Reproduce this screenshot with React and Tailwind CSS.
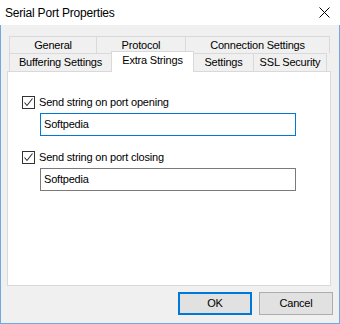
import React from "react";

function Tab({ children, className = "" }) {
  return (
    <div className={"flex items-center justify-center bg-[#f0f0f0] border-[#d9d9d9] " + className}>
      {children}
    </div>
  );
}

function Check({ label }) {
  return (
    <div className="flex items-center h-[15px] ml-[14px]">
      <div className="w-[13px] h-[13px] border border-[#333333] bg-white flex items-center justify-center">
        <svg width="11" height="11" viewBox="0 0 11 11">
          <path d="M1.5 5.5 L4 8.5 L9.5 1.5" fill="none" stroke="#333333" strokeWidth="1.1" />
        </svg>
      </div>
      <span className="ml-[4px]">{label}</span>
    </div>
  );
}

export default function App() {
  return (
    <div
      className="w-[340px] h-[324px] bg-[#f0f0f0] text-black text-[11px] tracking-[-0.2px] flex flex-col"
      style={{ fontFamily: '"Liberation Sans", Arial, sans-serif' }}
    >
      <div className="h-[25px] bg-white flex items-center justify-between pl-[5px] pr-[10px]">
        <span className="text-[12px] tracking-[-0.2px]">Serial Port Properties</span>
        <svg width="11" height="11" viewBox="0 0 11 11">
          <path d="M0.5 0.5 L10.5 10.5 M10.5 0.5 L0.5 10.5" stroke="#000" strokeWidth="1" />
        </svg>
      </div>
      <div className="flex-1 flex flex-col border-l border-r border-b border-[#6fa9de]">
        <div className="h-[11px]" />
        <div className="flex ml-[8px] h-[17px]">
          <Tab className="w-[87px] border-t border-l">General</Tab>
          <Tab className="w-[89px] border-t border-l">Protocol</Tab>
          <Tab className="w-[145px] border-t border-l border-r">Connection Settings</Tab>
        </div>
        <div className="flex items-start ml-[8px] h-[18px]">
          <Tab className="w-[102px] h-[18px] border-t border-l">Buffering Settings</Tab>
          <div className="relative z-10 -mt-[2px] w-[83px] h-[21px] bg-white border-t border-l border-r border-[#d9d9d9] flex items-center justify-center pb-[4px]">
            Extra Strings
          </div>
          <Tab className="w-[59px] h-[18px] border-t">Settings</Tab>
          <Tab className="w-[74px] h-[18px] border-t border-l border-r">SSL Security</Tab>
        </div>
        <div className="ml-[6px] w-[324px] h-[215px] bg-white border border-[#d9d9d9] flex flex-col">
          <div className="h-[23px]" />
          <Check label="Send string on port opening" />
          <div className="ml-[32px] mt-[3px] w-[256px] h-[23px] border border-[#0078d7] flex items-center pl-[3px]">
            Softpedia
          </div>
          <div className="h-[14px]" />
          <Check label="Send string on port closing" />
          <div className="ml-[32px] mt-[3px] w-[256px] h-[23px] border border-[#7a7a7a] flex items-center pl-[3px]">
            Softpedia
          </div>
        </div>
        <div className="flex justify-end gap-[7px] mt-[6px] pr-[6px]">
          <div className="w-[74px] h-[23px] bg-[#e1e1e1] border-2 border-[#0078d7] flex items-center justify-center">
            OK
          </div>
          <div className="w-[74px] h-[23px] bg-[#e1e1e1] border border-[#adadad] flex items-center justify-center">
            Cancel
          </div>
        </div>
      </div>
    </div>
  );
}
